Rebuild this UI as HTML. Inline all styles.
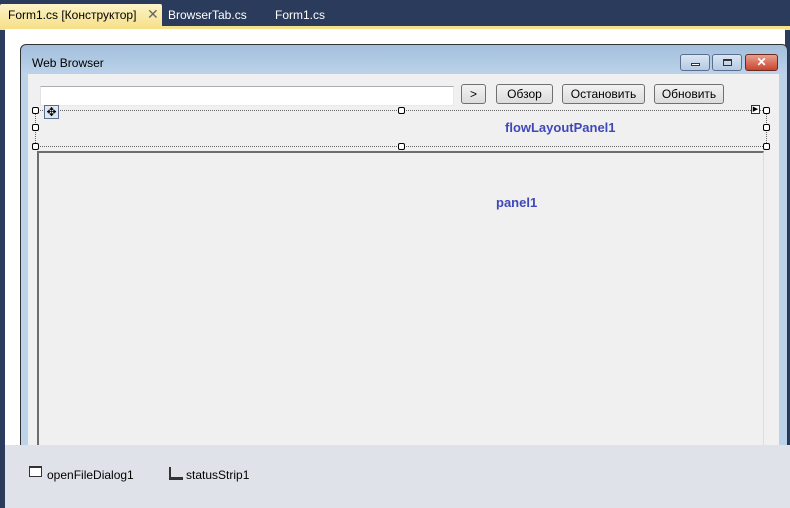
<!DOCTYPE html>
<html><head><style>
body{margin:0;width:790px;height:508px;overflow:hidden;background:#2b3b5c;font-family:"Liberation Sans",sans-serif;position:relative}
div{position:absolute;box-sizing:border-box}
.tab{font-size:12px;color:#fff;top:8px}
.btn{top:84px;height:20px;border:1px solid #707070;border-radius:3px;background:linear-gradient(#f2f2f2,#dcdcdc);font-size:12px;text-align:center;line-height:18px;color:#000}
.h{width:7px;height:7px;border:1px solid #000;background:#fff;border-radius:2px}
</style></head><body>
<div style="left:0;top:4px;width:162px;height:24px;background:linear-gradient(#fdf4c8,#f6e08a);border-radius:2px 2px 0 0"></div>
<div class="tab" style="left:8px;color:#000">Form1.cs [Конструктор]</div>
<div class="tab" style="left:147px;color:#666;top:6px;font-size:14px">✕</div>
<div class="tab" style="left:168px">BrowserTab.cs</div>
<div class="tab" style="left:275px">Form1.cs</div>
<div style="left:0;top:26px;width:790px;height:4px;background:#f6e08a"></div>
<div style="left:5px;top:29px;width:780px;height:416px;background:#fff"></div>
<div style="left:20px;top:44px;width:768px;height:401px;border:1px solid #333;border-bottom:none;border-radius:6px 6px 0 0;background:linear-gradient(#a3bfdc,#bdd3ea 30px,#bdd3ea)"></div>
<div style="left:32px;top:56px;font-size:12px;color:#000">Web Browser</div>
<div style="left:680px;top:54px;width:30px;height:17px;border:1px solid #5a6f8e;border-radius:3px;background:linear-gradient(#dbe6f3,#b5c9e2)"><div style="left:10px;top:8px;width:9px;height:3px;border:1px solid #333;background:#fff"></div></div>
<div style="left:712px;top:54px;width:30px;height:17px;border:1px solid #5a6f8e;border-radius:3px;background:linear-gradient(#dbe6f3,#b5c9e2)"><div style="left:10px;top:4px;width:9px;height:7px;border:1px solid #333;border-top-width:2px"></div></div>
<div style="left:745px;top:54px;width:33px;height:17px;border:1px solid #6b2a20;border-radius:3px;background:linear-gradient(#e8a090,#c8452e);color:#fff;font-weight:bold;font-size:12px;text-align:center;line-height:15px">✕</div>
<div style="left:28px;top:74px;width:751px;height:371px;background:#f0f0f0"></div>
<div style="left:40px;top:86px;width:414px;height:20px;background:#fff;border:1px solid #abadb3;border-color:#abadb3 #e3e9ef #e3e9ef #e2e3ea"></div>
<div class="btn" style="left:461px;width:25px">&gt;</div>
<div class="btn" style="left:496px;width:57px">Обзор</div>
<div class="btn" style="left:562px;width:83px">Остановить</div>
<div class="btn" style="left:654px;width:70px">Обновить</div>
<div style="left:35px;top:110px;width:732px;height:37px;border:1px dotted #666"></div>
<div class="h" style="left:32px;top:107px"></div><div class="h" style="left:398px;top:107px"></div><div class="h" style="left:763px;top:107px"></div>
<div class="h" style="left:32px;top:124px"></div><div class="h" style="left:763px;top:124px"></div>
<div class="h" style="left:32px;top:143px"></div><div class="h" style="left:398px;top:143px"></div><div class="h" style="left:763px;top:143px"></div>
<div style="left:44px;top:105px;width:15px;height:14px;border:1px solid #5a6f8e;background:#dfe7f2;font-size:12px;line-height:12px;text-align:center;color:#000">✥</div>
<div style="left:751px;top:105px;width:9px;height:9px;border:1px solid #333;background:#fff;font-size:7px;line-height:7px;text-align:center">▶</div>
<div style="left:505px;top:120px;font-size:13px;font-weight:bold;color:#3f48b8">flowLayoutPanel1</div>
<div style="left:37px;top:151px;width:727px;height:294px;border-left:2px solid #6d6d6d;border-top:2px solid #6d6d6d;border-right:1px solid #ddd"></div>
<div style="left:496px;top:195px;font-size:13px;font-weight:bold;color:#3f48b8">panel1</div>
<div style="left:5px;top:445px;width:785px;height:63px;background:#dfe2e9"></div>
<div style="left:29px;top:466px;width:13px;height:11px;border:1px solid #333;border-top-width:2px;background:#fff"></div>
<div style="left:47px;top:468px;font-size:12px;color:#000">openFileDialog1</div>
<div style="left:169px;top:467px;width:14px;height:13px;border-left:2px solid #333;border-bottom:3px solid #333"></div>
<div style="left:186px;top:468px;font-size:12px;color:#000">statusStrip1</div>
</body></html>
